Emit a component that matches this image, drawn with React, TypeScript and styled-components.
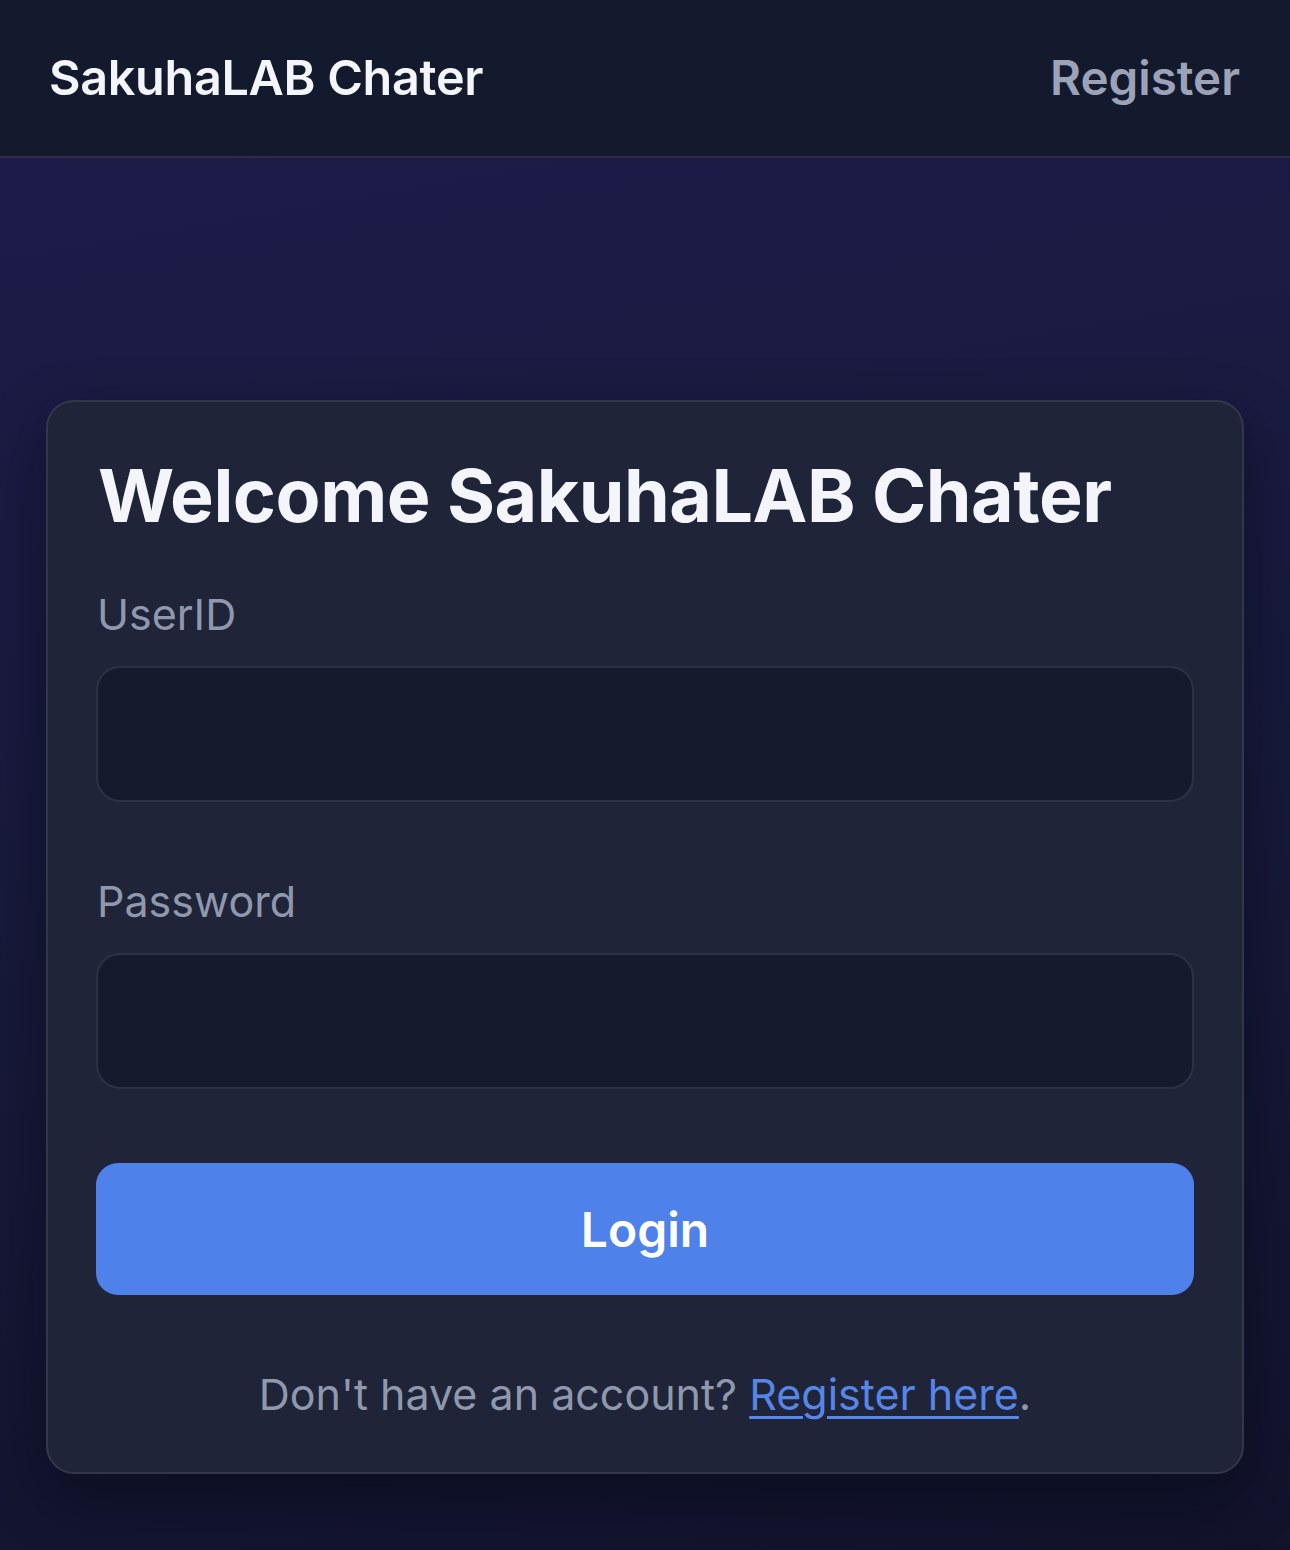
import React, { useState } from "react";
import styled, { createGlobalStyle } from "styled-components";

const GlobalStyle = createGlobalStyle`
  html, body {
    margin: 0;
    padding: 0;
    background: #12142b;
  }
  * {
    box-sizing: border-box;
  }
  body {
    font-family: Inter, "Noto Sans", sans-serif;
  }
`;

const App = () => {
  const [userId, setUserId] = useState("");
  const [password, setPassword] = useState("");

  return (
    <>
      <GlobalStyle />
      <Page>
        <NavBar>
          <Brand>SakuhaLAB Chater</Brand>
          <NavLink href="#">Register</NavLink>
        </NavBar>
        <Main>
          <Card>
            <Title>Welcome SakuhaLAB Chater</Title>
            <Field>
              <Label htmlFor="userid">UserID</Label>
              <Input
                id="userid"
                value={userId}
                onChange={(e) => setUserId(e.target.value)}
              />
            </Field>
            <Field>
              <Label htmlFor="password">Password</Label>
              <Input
                id="password"
                type="password"
                value={password}
                onChange={(e) => setPassword(e.target.value)}
              />
            </Field>
            <LoginButton type="button">Login</LoginButton>
            <Footer>
              Don't have an account? <FooterLink href="#">Register here</FooterLink>.
            </Footer>
          </Card>
        </Main>
      </Page>
    </>
  );
};

export default App;

const Page = styled.div`
  min-height: 1550px;
  display: flex;
  flex-direction: column;
  background: linear-gradient(170deg, #1e1b4b 0%, #181a3c 50%, #12132b 100%);
`;

const NavBar = styled.header`
  height: 158px;
  display: flex;
  align-items: center;
  justify-content: space-between;
  padding: 0 50px 2px 49px;
  background-color: #141a2e;
  border-bottom: 2px solid #2a2f46;
`;

const Brand = styled.div`
  color: #f3f5fa;
  font-size: 48.5px;
  font-weight: 600;
  letter-spacing: -0.3px;
`;

const NavLink = styled.a`
  color: #9ca3b8;
  font-size: 47.5px;
  font-weight: 600;
  text-decoration: none;
`;

const Main = styled.main`
  flex: 1;
  padding: 242px 46px 78px;
`;

const Card = styled.div`
  display: flex;
  flex-direction: column;
  padding: 50px 48px 46px;
  background-color: #1f2438;
  border: 2px solid #323849;
  border-radius: 28px;
  box-shadow: 0 24px 60px rgba(5, 6, 20, 0.45);
`;

const Title = styled.h1`
  margin: 0 0 42px 2px;
  color: #f3f5fb;
  font-size: 73.5px;
  line-height: 88px;
  font-weight: 700;
  letter-spacing: -0.5px;
`;

const Field = styled.div`
  display: flex;
  flex-direction: column;
  gap: 20px;
  & + & {
    margin-top: 67px;
  }
`;

const Label = styled.label`
  margin-left: 1px;
  color: #8f98ad;
  font-size: 43px;
  line-height: 64px;
`;

const Input = styled.input`
  height: 136px;
  width: 100%;
  padding: 0 30px;
  background-color: #151a2d;
  border: 2px solid #2c3246;
  border-radius: 24px;
  color: #e5e7eb;
  font-size: 44px;
  font-family: inherit;
  outline: none;
`;

const LoginButton = styled.button`
  margin-top: 74px;
  height: 132px;
  width: 100%;
  border: none;
  border-radius: 22px;
  background-color: #4f81ea;
  color: #ffffff;
  font-family: inherit;
  font-size: 48px;
  font-weight: 600;
  cursor: pointer;
`;

const Footer = styled.p`
  margin: 67px 0 0;
  text-align: center;
  color: #8f98ad;
  font-size: 43px;
  line-height: 64px;
`;

const FooterLink = styled.a`
  color: #5686e8;
  text-decoration: underline;
  text-underline-offset: 6px;
  text-decoration-thickness: 3px;
`;
